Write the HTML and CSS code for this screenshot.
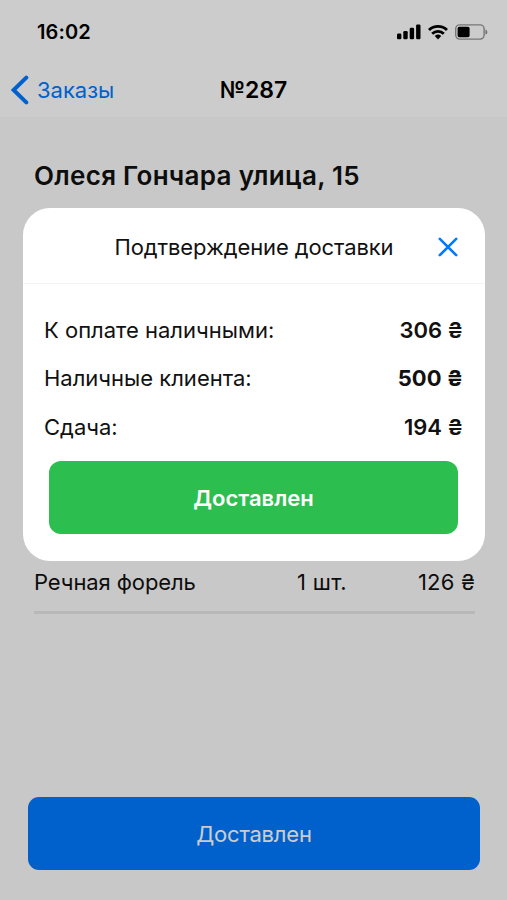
FILE: index.html
```html
<!DOCTYPE html>
<html lang="ru">
<head>
    <meta charset="UTF-8">
    <meta name="viewport" content="width=device-width, initial-scale=1.0">
    <title>Заказ №287</title>
    <link rel="stylesheet" href="styles.css">
</head>
<body>
    <div class="screen">
        <header class="header">
            <!-- Status bar -->
            <div class="status-bar">
                <span class="time">16:02</span>
                <div class="status-icons">
                    <svg width="24" height="16" viewBox="0 0 24 16">
                        <rect x="0" y="9.5" width="4.4" height="5.8" rx="1.3"/>
                        <rect x="6.3" y="7" width="4.4" height="8.3" rx="1.3"/>
                        <rect x="12.7" y="3.8" width="4.4" height="11.5" rx="1.3"/>
                        <rect x="19.1" y="0.5" width="4.4" height="14.8" rx="1.3"/>
                    </svg>
                    <svg width="20" height="16" viewBox="0 0 20 16">
                        <g fill="none" stroke="#000" stroke-width="2.9">
                            <path d="M1 6a13 13 0 0 1 18 0"/>
                            <path d="M4.2 9.7a8.4 8.4 0 0 1 11.6 0"/>
                        </g>
                        <path d="M6.8 12.1a4.7 4.7 0 0 1 6.4 0L10 15.4z"/>
                    </svg>
                    <svg width="33" height="16" viewBox="0 0 33 16">
                        <rect x="0.7" y="0.9" width="28.4" height="14.2" rx="4" fill="none" stroke="#949494" stroke-width="1.4"/>
                        <rect x="2.6" y="2.8" width="12" height="10.4" rx="1.6"/>
                        <path d="M30.4 5.4c2.6.8 2.6 4.4 0 5.2z" fill="#949494"/>
                    </svg>
                </div>
            </div>

            <!-- Navigation -->
            <nav class="nav-bar">
                <a class="back" href="#">
                    <svg width="18" height="30" viewBox="0 0 18 30">
                        <path d="M15.3 2.6L2.6 15l12.7 12.4" fill="none" stroke="#007aff" stroke-width="4" stroke-linecap="round" stroke-linejoin="miter"/>
                    </svg>
                    <span>Заказы</span>
                </a>
                <span class="nav-title">№287</span>
            </nav>
        </header>

        <!-- Order -->
        <main class="order">
            <h1 class="address">Олеся Гончара улица, 15</h1>
            <div class="item">
                <span class="item-name">Речная форель</span>
                <span class="item-count">1 шт.</span>
                <span class="item-price">126 ₴</span>
            </div>
        </main>

        <button class="btn btn-primary" type="button">Доставлен</button>
    </div>

    <!-- Delivery confirmation -->
    <div class="overlay">
        <div class="modal">
            <div class="modal-header">
                <h2 class="modal-title">Подтверждение доставки</h2>
                <button class="close" type="button" aria-label="Закрыть">
                    <svg width="20" height="20" viewBox="0 0 20 20">
                        <path d="M1.8 1.8l16.4 16.4M18.2 1.8L1.8 18.2" fill="none" stroke="#007aff" stroke-width="2.6" stroke-linecap="round"/>
                    </svg>
                </button>
            </div>
            <div class="modal-body">
                <div class="row">
                    <span>К оплате наличными:</span>
                    <b>306 ₴</b>
                </div>
                <div class="row">
                    <span>Наличные клиента:</span>
                    <b class="bold">500 ₴</b>
                </div>
                <div class="row">
                    <span>Сдача:</span>
                    <b>194 ₴</b>
                </div>
                <button class="btn btn-success" type="button">Доставлен</button>
            </div>
        </div>
    </div>
</body>
</html>
```

FILE: styles.css
```css
* {
    box-sizing: border-box;
}
body {
    margin: 0;
    font-family: Inter, "Noto Sans", sans-serif;
    font-size: 22px;
    line-height: 28px;
    color: #111;
    background-color: #fafafa;
}
.screen {
    height: 900px;
    display: flex;
    flex-direction: column;
}

/* Header */
.header {
    height: 117px;
    color: #000;
    background-color: #fff;
}
.status-bar {
    display: flex;
    justify-content: space-between;
    align-items: center;
    height: 64px;
    padding: 0 19px 0 37px;
}
.time {
    font-size: 20px;
    font-weight: 600;
    letter-spacing: 0.1px;
}
.status-icons {
    display: flex;
    align-items: center;
    gap: 7px;
}
.nav-bar {
    display: grid;
    grid-template-columns: 1fr auto 1fr;
    align-items: center;
    height: 52px;
    padding: 0 11px;
}
.back {
    display: flex;
    align-items: center;
    gap: 8px;
    color: #007aff;
    text-decoration: none;
}
.nav-title {
    font-size: 23px;
    font-weight: 600;
}

/* Order */
.order {
    flex: 1;
    padding: 0 32px 0 34px;
}
.address {
    margin: 43px 0 376px;
    font-size: 26px;
    line-height: 32px;
    font-weight: 600;
    letter-spacing: 0.3px;
}
.item {
    display: grid;
    grid-template-columns: 1fr 78px 100px;
    height: 46px;
    border-bottom: 3px solid #e6e6e6;
}
.item-name {
    letter-spacing: -0.1px;
}
.item-count {
    letter-spacing: 0.3px;
}
.item-price {
    text-align: right;
    letter-spacing: 0.2px;
}

/* Buttons */
.btn {
    display: block;
    height: 73px;
    border: none;
    border-radius: 12px;
    font: inherit;
    color: #fff;
    cursor: pointer;
}
.btn-primary {
    flex: none;
    margin: 0 27px 30px 28px;
    border-radius: 11px;
    letter-spacing: -0.2px;
    background-color: #007aff;
}
.btn-success {
    width: 409px;
    margin: 10px auto 0;
    font-weight: 600;
    background-color: #2dbe50;
}

/* Modal */
.overlay {
    position: fixed;
    inset: 0;
    padding-top: 208px;
    background-color: rgba(0, 0, 0, 0.2);
}
.modal {
    width: 462px;
    height: 353px;
    margin: 0 auto;
    border-radius: 27px;
    background-color: #fff;
}
.modal-header {
    display: grid;
    grid-template-columns: 1fr auto 1fr;
    align-items: center;
    height: 76px;
    padding: 2px 27px 0 28px;
    border-bottom: 1px solid #f4f4f4;
}
.modal-title {
    grid-column: 2;
    margin: 0;
    font-size: 22px;
    font-weight: 400;
    letter-spacing: -0.1px;
}
.close {
    justify-self: end;
    display: flex;
    padding: 0;
    border: none;
    background: none;
    cursor: pointer;
}
.modal-body {
    padding: 21.5px 21.5px 0;
}
.row {
    display: flex;
    justify-content: space-between;
    align-items: center;
    height: 48.5px;
}
.row b {
    font-weight: 600;
}
.row .bold {
    font-weight: 700;
}
```
